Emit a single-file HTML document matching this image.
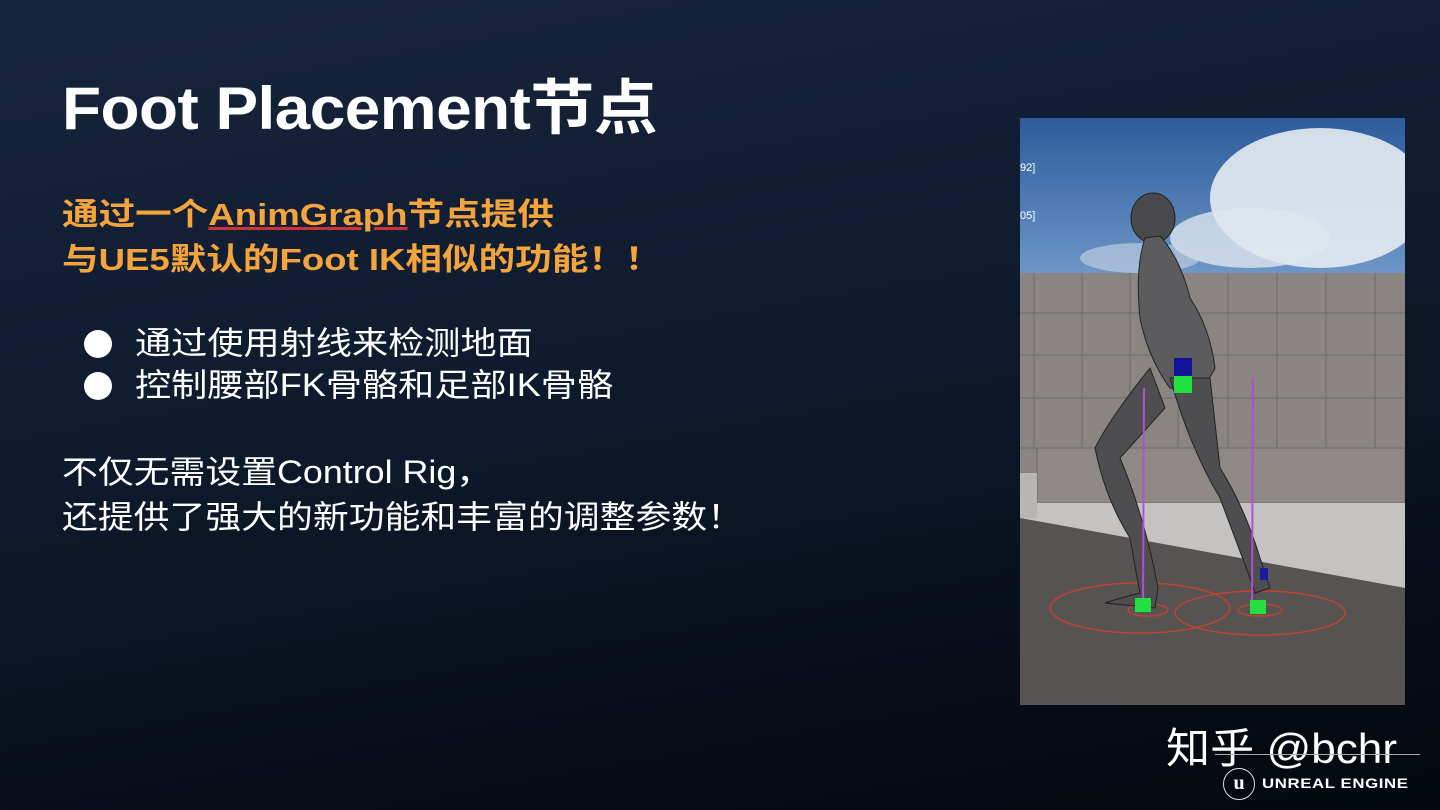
<!DOCTYPE html>
<html><head><meta charset="utf-8"><style>
html,body{margin:0;padding:0}
body{width:1440px;height:810px;overflow:hidden;position:relative;background:linear-gradient(170deg,#17253d 0%,#0e1a2d 45%,#070d17 80%,#04080e 100%);font-family:"Liberation Sans","Noto Sans CJK SC",sans-serif;color:#fff}
.t{position:absolute;white-space:nowrap;transform-origin:0 0}
.dot{position:absolute;left:84px;width:28px;height:28px;border-radius:50%;background:#fff}
</style></head><body>
<div class="t" style="left:62px;top:60px;font-size:60px;font-weight:bold;letter-spacing:-0.5px;transform:scaleX(1.065)">Foot Placement节点</div>
<div class="t" style="left:62px;top:192px;font-size:31px;font-weight:bold;color:#f4a43c;line-height:45px;transform:scaleX(1.18)">通过一个<span style="text-decoration:underline;text-decoration-color:#c33">AnimGraph</span>节点提供<br>与UE5默认的Foot IK相似的功能！！</div>
<div class="dot" style="top:330px"></div>
<div class="dot" style="top:372px"></div>
<div class="t" style="left:135px;top:322px;font-size:32px;line-height:42px;transform:scaleX(1.13)">通过使用射线来检测地面<br>控制腰部FK骨骼和足部IK骨骼</div>
<div class="t" style="left:62px;top:450px;font-size:32px;line-height:45px;transform:scaleX(1.12)">不仅无需设置Control Rig，<br>还提供了强大的新功能和丰富的调整参数！</div>

<div style="position:absolute;left:1020px;top:118px;width:385px;height:587px;overflow:hidden;background:#6a6968">
<svg width="385" height="587" viewBox="0 0 385 587">
<defs><linearGradient id="sky" x1="0" y1="0" x2="0" y2="1"><stop offset="0" stop-color="#2c5c9c"/><stop offset="1" stop-color="#6f98c8"/></linearGradient></defs>
<rect width="385" height="160" fill="url(#sky)"/>
<ellipse cx="300" cy="80" rx="110" ry="70" fill="#e6ecf2" opacity=".9"/>
<ellipse cx="230" cy="120" rx="80" ry="30" fill="#dfe6ee" opacity=".8"/>
<ellipse cx="120" cy="140" rx="60" ry="15" fill="#c9d6e4" opacity=".6"/>
<rect y="155" width="385" height="280" fill="#8a8582"/>
<g stroke="#6e6a68" stroke-width="1">
<line x1="0" y1="195" x2="385" y2="195"/><line x1="0" y1="237" x2="385" y2="237"/><line x1="0" y1="280" x2="385" y2="280"/><line x1="0" y1="330" x2="385" y2="330"/>
<line x1="14" y1="155" x2="14" y2="330"/><line x1="62" y1="155" x2="62" y2="330"/><line x1="110" y1="155" x2="110" y2="330"/><line x1="158" y1="155" x2="158" y2="330"/><line x1="208" y1="155" x2="208" y2="330"/><line x1="257" y1="155" x2="257" y2="330"/><line x1="306" y1="155" x2="306" y2="330"/><line x1="355" y1="155" x2="355" y2="330"/>
</g>
<rect x="17" y="330" width="368" height="55" fill="#8e8986" stroke="#6e6a68"/>
<polygon points="0,385 385,385 385,470 0,400" fill="#c5c3c2"/>
<polygon points="0,400 385,470 385,587 0,587" fill="#565352"/>
<polygon points="0,355 17,355 17,400 0,400" fill="#b8b6b4"/>
<g fill="none" stroke="#d2412a" stroke-width="1.5" opacity=".85">
<ellipse cx="120" cy="490" rx="90" ry="25"/><ellipse cx="240" cy="495" rx="85" ry="22"/><ellipse cx="128" cy="492" rx="20" ry="6"/><ellipse cx="240" cy="492" rx="22" ry="6"/>
</g>
<g fill="#555" stroke="#222" stroke-width="1">
<ellipse cx="133" cy="100" rx="22" ry="25" fill="#4a4a4c"/>
<path d="M125,120 Q115,150 120,200 Q128,240 150,270 Q185,275 195,250 Q190,210 170,180 Q160,140 140,118 Z" fill="#5c5c5e"/>
<path d="M130,250 Q90,300 75,330 Q85,380 110,420 L120,475 Q100,480 85,485 L135,490 L138,470 Q125,400 100,340 L145,290 Z" fill="#4e4e50"/>
<path d="M150,260 Q170,330 200,380 L230,460 L235,475 L250,470 L240,440 Q225,390 200,350 L190,260 Z" fill="#4e4e50"/>
</g>
<g stroke="#b050d0" stroke-width="2"><line x1="124" y1="270" x2="123" y2="490"/><line x1="233" y1="260" x2="232" y2="495"/></g>
<rect x="154" y="240" width="18" height="18" fill="#12129a"/><rect x="154" y="258" width="18" height="17" fill="#22e040"/>
<rect x="115" y="480" width="16" height="14" fill="#22e040"/><rect x="230" y="482" width="16" height="14" fill="#22e040"/><rect x="240" y="450" width="8" height="12" fill="#1a1aa0"/>
<text x="0" y="53" font-size="11" fill="#fff" font-family="Liberation Sans">92]</text>
<text x="0" y="101" font-size="11" fill="#fff" font-family="Liberation Sans">05]</text>
</svg>
</div>

<div class="t" style="left:1166px;top:724px;font-size:42px;line-height:50px;transform:scaleX(1.05)">知乎 @bchr</div>
<div style="position:absolute;left:1215px;top:754px;width:205px;height:1px;background:#aaa"></div>
<div style="position:absolute;left:1223px;top:768px;width:32px;height:32px;border:1.5px solid #ddd;border-radius:50%;box-sizing:border-box;text-align:center;font:bold 20px/29px 'Liberation Serif',serif">u</div>
<div class="t" style="left:1262px;top:775px;font-size:14px;font-weight:bold;letter-spacing:0.5px;transform:scaleX(1.2)">UNREAL ENGINE</div>
</body></html>
